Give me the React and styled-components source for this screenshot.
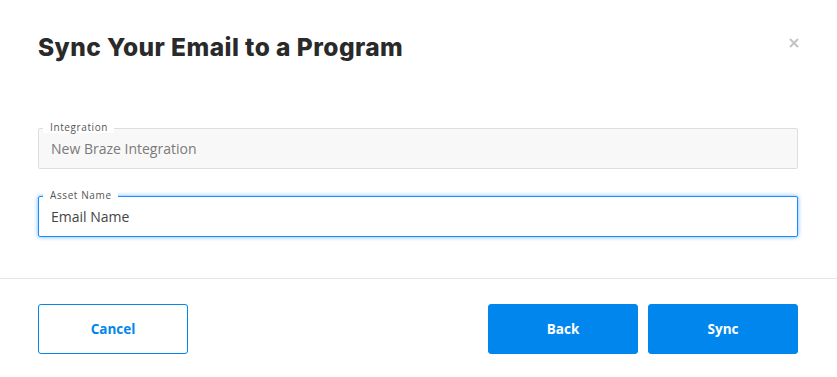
import React, { useState } from "react";
import styled, { createGlobalStyle } from "styled-components";

const GlobalStyle = createGlobalStyle`
  * { box-sizing: border-box; }
  body {
    margin: 0;
    background: #fff;
    font-family: "Open Sans", "Liberation Sans", sans-serif;
  }
`;

const Modal = styled.div`
  width: 837px;
  height: 377px;
  background: #fff;
  display: flex;
  flex-direction: column;
`;

const Header = styled.div`
  display: flex;
  justify-content: space-between;
  align-items: flex-start;
  padding: 31px 38px 0 38px;
`;

const Title = styled.h1`
  margin: 0;
  font-family: Inter, "Liberation Sans", sans-serif;
  font-weight: 800;
  font-size: 24.5px;
  line-height: 32px;
  color: #2a2a2a;
  letter-spacing: 0.45px;
`;

const CloseButton = styled.button`
  border: none;
  background: none;
  padding: 0;
  margin-top: 5px;
  margin-right: -4px;
  width: 18px;
  height: 14px;
  display: flex;
  align-items: center;
  justify-content: center;
  cursor: pointer;
`;

const Body = styled.div`
  display: flex;
  flex-direction: column;
  gap: 27px;
  padding: 65px 39px 41px 38px;
  border-bottom: 1px solid #e6e6e6;
`;

const Field = styled.div`
  position: relative;
`;

const FloatLabel = styled.label`
  position: absolute;
  top: -7px;
  left: 5px;
  padding: 0 6px 0 7px;
  background: #fff;
  font-size: 10px;
  line-height: 12px;
  letter-spacing: 0.6px;
  color: #555;
`;

const Input = styled.input`
  display: block;
  width: 100%;
  height: 41px;
  padding: 0 12px;
  font-family: "Open Sans", "Liberation Sans", sans-serif;
  font-size: 14px;
  border-radius: 2px;
  outline: none;
  border: 1px solid ${(p) => (p.$focused ? "#1a8cff" : "#dedede")};
  background: ${(p) => (p.disabled ? "#f8f8f8" : "#fff")};
  color: ${(p) => (p.disabled ? "#7a7a7a" : "#444")};
  box-shadow: ${(p) => (p.$focused ? "0 0 4px rgba(20, 140, 255, 0.65)" : "none")};
`;

const Footer = styled.div`
  display: flex;
  justify-content: space-between;
  padding: 25px 39px 22px 38px;
`;

const ButtonGroup = styled.div`
  display: flex;
  gap: 10px;
`;

const Button = styled.button`
  width: 150px;
  height: 50px;
  border-radius: 3px;
  border: 1px solid #0086ed;
  background: ${(p) => (p.$outline ? "#fff" : "#0086ed")};
  color: ${(p) => (p.$outline ? "#0086ed" : "#fff")};
  font-family: "Open Sans", "Liberation Sans", sans-serif;
  font-weight: 700;
  font-size: 13.5px;
  cursor: pointer;
`;

const App = () => {
  const [assetName, setAssetName] = useState("Email Name");

  return (
    <>
      <GlobalStyle />
      <Modal>
        <Header>
          <Title>Sync Your Email to a Program</Title>
          <CloseButton aria-label="Close">
            <svg width="10" height="10" viewBox="0 0 10 10">
              <path d="M1 1 L9 9 M9 1 L1 9" stroke="#c4c4c4" strokeWidth="2" />
            </svg>
          </CloseButton>
        </Header>
        <Body>
          <Field>
            <FloatLabel>Integration</FloatLabel>
            <Input disabled value="New Braze Integration" readOnly />
          </Field>
          <Field>
            <FloatLabel>Asset Name</FloatLabel>
            <Input
              $focused
              value={assetName}
              onChange={(e) => setAssetName(e.target.value)}
            />
          </Field>
        </Body>
        <Footer>
          <Button $outline>Cancel</Button>
          <ButtonGroup>
            <Button>Back</Button>
            <Button>Sync</Button>
          </ButtonGroup>
        </Footer>
      </Modal>
    </>
  );
};

export default App;
